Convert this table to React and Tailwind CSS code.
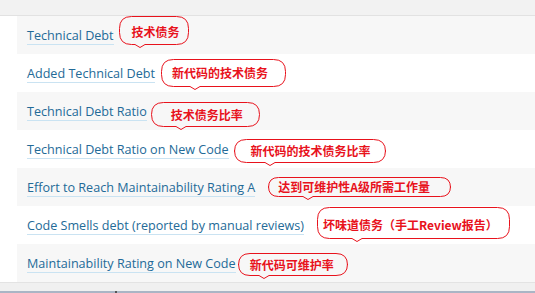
import React from 'react';

const metrics = [
    { name: 'Technical Debt', note: '技术债务', w: 70, h: 29, tip: 21, box: 'ml-[5px] mt-0 pl-[13px] pt-[3px]' },
    { name: 'Added Technical Debt', note: '新代码的技术债务', w: 125, h: 28, tip: 34, box: 'ml-[6px] mt-[5px] pl-[11px]' },
    { name: 'Technical Debt Ratio', note: '技术债务比率', w: 109, h: 25, tip: 30, box: 'ml-[4px] mt-[10px] pl-[20px]' },
    { name: 'Technical Debt Ratio on New Code', note: '新代码的技术债务比率', w: 152, h: 24, tip: 36, box: 'ml-[5px] mt-[9px] pl-[17px]' },
    { name: 'Effort to Reach Maintainability Rating A', note: '达到可维护性A级所需工作量', w: 183, h: 20, tip: 40, box: 'ml-[13px] mt-[9px] pl-[10px]' },
    { name: 'Code Smells debt (reported by manual reviews)', note: '坏味道债务（手工Review报告）', w: 193, h: 32, tip: 40, box: 'ml-[13px] mt-px pl-[6px] pt-[3px]' },
    { name: 'Maintainability Rating on New Code', note: '新代码可维护率', w: 110, h: 23, tip: 26, box: 'ml-[2px] mt-[9px] pl-[12px]' },
];

// hand-drawn style callout outline with a small point at the bottom
const bubblePath = (w, h, tip) => {
    const r = Math.min(h / 2, 12);
    const x0 = 0.5, y0 = 0.5, x1 = w - 0.5, y1 = h - 0.5;
    return [
        `M ${x0 + r} ${y0}`,
        `L ${x1 - r} ${y0}`,
        `Q ${x1} ${y0} ${x1} ${y0 + r}`,
        `L ${x1} ${y1 - r}`,
        `Q ${x1} ${y1} ${x1 - r} ${y1}`,
        `L ${tip + 5} ${y1}`,
        `L ${tip} ${y1 + 3}`,
        `L ${tip - 5} ${y1}`,
        `L ${x0 + r} ${y1}`,
        `Q ${x0} ${y1} ${x0} ${y1 - r}`,
        `L ${x0} ${y0 + r}`,
        `Q ${x0} ${y0} ${x0 + r} ${y0}`,
        'Z',
    ].join(' ');
};

const Callout = ({ note, w, h, tip, box }) => (
    <div className={`relative self-start flex items-center shrink-0 ${box}`} style={{ width: w, height: h }}>
        <svg className="absolute left-0 top-0 overflow-visible" width={w} height={h} viewBox={`0 0 ${w} ${h}`}>
            <path d={bubblePath(w, h, tip)} fill="none" stroke="#e8121c" strokeWidth="1" />
        </svg>
        <span className="relative text-[12px] font-bold leading-none text-[#e8121c] whitespace-nowrap [font-family:'Noto_Sans_CJK_SC',sans-serif]">
            {note}
        </span>
    </div>
);

const App = () => {
    return (
        <div className="w-[535px] h-[293px] bg-white overflow-hidden flex flex-col [font-family:'Open_Sans',sans-serif]">
            {/* top bar */}
            <div className="h-[16px] bg-[#f2f2f2] border-b border-[#e2e2e2] shrink-0" />

            {/* metric rows */}
            <div className="pl-[17px]">
                {metrics.map((m, i) => (
                    <div
                        key={m.name}
                        className={`h-[38px] flex items-center pl-[10px] ${i % 2 === 0 ? 'bg-[#f7f7f7]' : 'bg-white'}`}
                    >
                        <span className="text-[12.6px] leading-[16px] text-[#236a97] border-b border-[#cae3f2] whitespace-nowrap mt-[2px]">
                            {m.name}
                        </span>
                        <Callout {...m} />
                    </div>
                ))}
            </div>

            {/* bottom edge */}
            <div className="flex-1 flex flex-col border-t border-[#e3e3e3] bg-[#f0f0f0]">
                <div className="flex-1" />
                <div className="h-[2px] bg-[#aab5c5] flex">
                    <div className="ml-[115px] w-[2px] bg-[#555]" />
                </div>
            </div>
        </div>
    );
};

export default App;
